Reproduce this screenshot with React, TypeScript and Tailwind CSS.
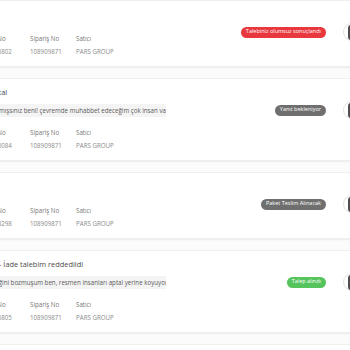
type Card = {
  title: string;
  message?: string;
  talepNo: string;
  status: string;
  tone: 'red' | 'gray' | 'green';
};

const cards: Card[] = [
  { title: 'İade', talepNo: '108916802', status: 'Talebiniz olumsuz sonuçlandı', tone: 'red' },
  {
    title: 'Ön iptal',
    message: 'Şaşırtmışsınız beni! çevremde muhabbet edeceğim çok insan var, teşekkürler',
    talepNo: '108916084',
    status: 'Yanıt bekleniyor',
    tone: 'gray',
  },
  { title: 'İade', talepNo: '108918298', status: 'Paket Teslim Alınacak', tone: 'gray' },
  {
    title: 'Renk - İade talebim reddedildi',
    message: 'İstediğini bozmuşum ben, resmen insanları aptal yerine koyuyorsunuz',
    talepNo: '108916805',
    status: 'Talep alındı',
    tone: 'green',
  },
  { title: 'İade', talepNo: '108916811', status: 'Talep alındı', tone: 'green' },
];

const toneClass = {
  red: 'bg-[#e8373d]',
  gray: 'bg-[#6f6f6f]',
  green: 'bg-[#55c45c]',
};

function RequestCard({ card }: { card: Card }) {
  return (
    <div className="flex justify-between bg-white px-[20px] shadow-[0_0_0_1px_#efefef,0_1px_2px_rgba(0,0,0,0.16)]">
      <div className="flex flex-col pt-[8px] pb-[10px]">
        <div className="h-[11px] whitespace-nowrap text-[7.4px] leading-[11px] text-[#4a4a4a]">{card.title}</div>
        {card.message && (
          <div className="mt-[6px] h-[13px] w-[186px] overflow-hidden whitespace-nowrap bg-[#f4f4f4] px-[3px] text-[6.2px] leading-[13px] text-[#5a5a5a]">
            {card.message}
          </div>
        )}
        <div className={`${card.message ? 'mt-[12px]' : 'mt-[15px]'} flex text-[6.2px] leading-[8px]`}>
          <div className="flex w-[50px] flex-col gap-[5px]">
            <span className="text-[#777]">Talep No</span>
            <span className="text-[#8a8a8a]">{card.talepNo}</span>
          </div>
          <div className="flex w-[46px] flex-col gap-[5px]">
            <span className="text-[#777]">Sipariş No</span>
            <span className="text-[#8a8a8a]">108909871</span>
          </div>
          <div className="flex flex-col gap-[5px]">
            <span className="text-[#777]">Satıcı</span>
            <span className="text-[#8a8a8a]">PARS GROUP</span>
          </div>
        </div>
      </div>
      <div className="mt-[22px] flex h-[18px] items-center gap-[17px]">
        <span
          className={`${toneClass[card.tone]} flex h-[11px] items-center rounded-full px-[5px] text-[5.5px] leading-none whitespace-nowrap text-white`}
        >
          {card.status}
        </span>
        <div className="flex h-[18px] w-[18px] items-center rounded-full border border-[#e2e2e2] bg-white pl-[4px]">
          <div className="h-[15px] w-[12px] rounded-[3px] bg-[#4f4f4f]" />
        </div>
      </div>
    </div>
  );
}

export default function App() {
  return (
    <div className="h-[350px] w-[350px] overflow-hidden bg-[#fbfbfb] font-['Open_Sans',sans-serif]">
      <div className="-ml-[40px] flex w-[421px] flex-col gap-[13px] pt-px">
        {cards.map((c, i) => (
          <RequestCard key={i} card={c} />
        ))}
      </div>
    </div>
  );
}
